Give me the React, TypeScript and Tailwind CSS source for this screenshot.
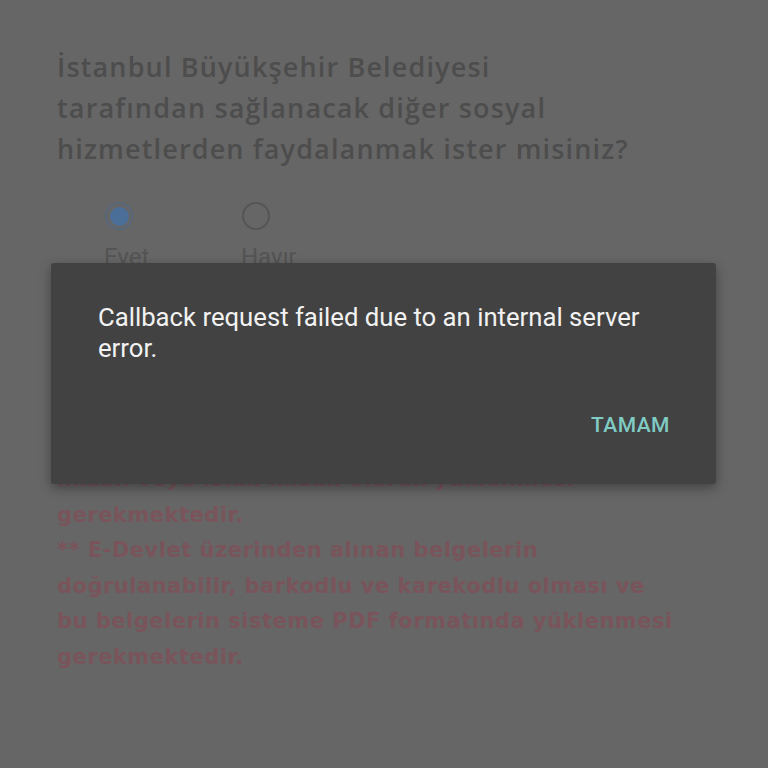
import React from "react";

const heading = [
    "İstanbul Büyükşehir Belediyesi",
    "tarafından sağlanacak diğer sosyal",
    "hizmetlerden faydalanmak ister misiniz?",
];

const notes = [
    "* Başvuru sırasında sisteme yüklenen",
    "belgelerin kurum yetkilisi tarafından",
    "imzalı veya ıslak imzalı olarak yüklenmesi",
    "gerekmektedir.",
    "** E-Devlet üzerinden alınan belgelerin",
    "doğrulanabilir, barkodlu ve karekodlu olması ve",
    "bu belgelerin sisteme PDF formatında yüklenmesi",
    "gerekmektedir.",
];

function Radio({ label, checked }: { label: string; checked?: boolean }) {
    return (
        <div className="flex flex-col items-start w-[137px]">
            <div
                className={
                    "w-[28px] h-[28px] rounded-full border-2 flex items-center justify-center " +
                    (checked ? "border-[#58687a]" : "border-[#555555]")
                }
            >
                {checked && <div className="w-[19px] h-[19px] rounded-full bg-[#4b6f98]" />}
            </div>
            <span className="-ml-[1px] mt-[14px] text-[24px] leading-[26px] text-[#545454] font-['Roboto',sans-serif]">
                {label}
            </span>
        </div>
    );
}

export default function App() {
    return (
        <div className="relative w-[768px] h-[768px] overflow-hidden bg-[#666666]">
            <div className="pl-[57px] pt-[46px]">
                <h2 className="text-[27px] leading-[41px] tracking-[1.15px] font-semibold text-[#4d4d4d] font-['Open_Sans',sans-serif]">
                    {heading.map((l) => (
                        <div key={l}>{l}</div>
                    ))}
                </h2>
                <div className="flex mt-[33px] pl-[48px]">
                    <Radio label="Evet" checked />
                    <Radio label="Havır" />
                </div>
                <div className="mt-[121px] text-[21px] leading-[35.5px] tracking-[0.5px] font-bold text-[#7a545b] font-['DejaVu_Sans',sans-serif]">
                    {notes.map((l, i) => (
                        <div key={i}>{l}</div>
                    ))}
                </div>
            </div>

            {/* alert dialog */}
            <div className="absolute left-[51px] top-[263px] w-[665px] h-[221px] rounded-[3px] bg-[#424242] shadow-[0_4px_12px_rgba(0,0,0,0.35)] flex flex-col font-['Roboto',sans-serif]">
                <p className="pl-[47px] pr-[50px] pt-[39px] text-[25.7px] leading-[31px] text-[#f2f2f2]">
                    Callback request failed due to an internal server error.
                </p>
                <div className="mt-auto flex justify-end pr-[46px] pb-[47px]">
                    <button className="text-[21px] leading-[24px] font-medium tracking-[0.5px] text-[#80cbc4]">
                        TAMAM
                    </button>
                </div>
            </div>
        </div>
    );
}
